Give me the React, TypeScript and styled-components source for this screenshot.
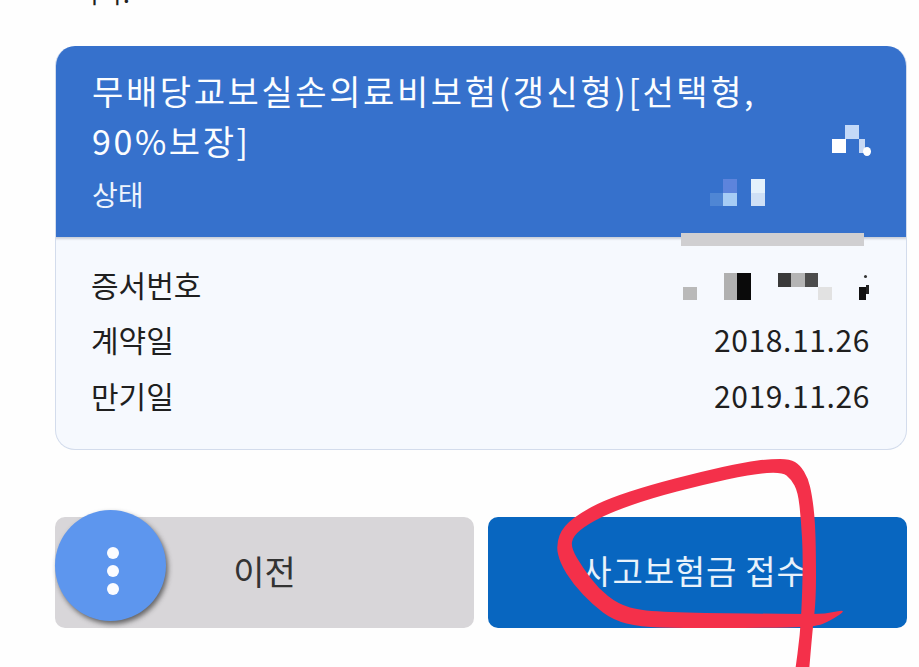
import React from 'react';
import styled, { createGlobalStyle } from 'styled-components';

const GlobalStyle = createGlobalStyle`
  html, body {
    margin: 0;
    padding: 0;
    background: #fefefe;
    overflow: hidden;
  }
  body {
    font-family: "Noto Sans CJK KR", "Noto Sans", sans-serif;
  }
`;

const mosaicCells = [
  { x: 50, y: 69, w: 14, h: 14, c: '#5d84dc' },
  { x: 37, y: 83, w: 13, h: 13, c: '#4f86d4' },
  { x: 50, y: 83, w: 14, h: 13, c: '#a6ccf5' },
  { x: 78, y: 69, w: 14, h: 14, c: '#e4f1fc' },
  { x: 78, y: 83, w: 14, h: 13, c: '#cfe0f6' },
  { x: 172, y: 15, w: 14, h: 14, c: '#c3d9f8' },
  { x: 159, y: 29, w: 14, h: 14, c: '#ffffff' },
  { x: 186, y: 29, w: 6, h: 14, c: '#c8d9f4' },
];

const idCells = [
  { x: 0, y: 14, w: 14, h: 13, c: '#b9b9b9' },
  { x: 41, y: 0, w: 13, h: 27, c: '#b0b0b0' },
  { x: 54, y: 0, w: 14, h: 27, c: '#0a0a0a' },
  { x: 95, y: 0, w: 13, h: 14, c: '#3a3a3a' },
  { x: 108, y: 0, w: 14, h: 14, c: '#b4b4b4' },
  { x: 122, y: 0, w: 13, h: 14, c: '#4c4c4c' },
  { x: 135, y: 14, w: 14, h: 13, c: '#e2e2e2' },
  { x: 176, y: 14, w: 7, h: 13, c: '#111111' },
];

// outline of the red pen stroke, right side first and back along the inside
const scribblePoints: [number, number][] = [
  [809, 672], [812, 635], [816, 600], [816, 555], [815, 520], [812, 495], [808, 478], [800, 465], [790, 459],
  [770, 459], [745, 462], [700, 472], [650, 485], [610, 498], [585, 510], [563, 526], [556, 545],
  [560, 563], [573, 584], [593, 605], [613, 620], [640, 627], [680, 628], [760, 628], [815, 627], [830, 621], [848, 609],
  [825, 614], [800, 614], [700, 613], [642, 611], [618, 604], [598, 588], [583, 568], [571, 548],
  [573, 536], [588, 524], [612, 512], [652, 498], [702, 485], [752, 474], [782, 472], [791, 479], [798, 492],
  [801, 520], [803, 555], [802, 600], [800, 635], [795, 672],
];

function smoothPath(points: [number, number][]) {
  let d = `M${points[0][0]} ${points[0][1]}`;
  for (let i = 1; i < points.length - 1; i++) {
    const [x, y] = points[i];
    const [nx, ny] = points[i + 1];
    d += ` Q${x} ${y} ${(x + nx) / 2} ${(y + ny) / 2}`;
  }
  const last = points[points.length - 1];
  return `${d} L${last[0]} ${last[1]} Z`;
}

function App() {
  return (
    <Page>
      <GlobalStyle />
      <ClippedText>니다.</ClippedText>

      <Card>
        <CardHeader>
          <Title>
            무배당교보실손의료비보험(갱신형)[선택형,
            <br />
            90%보장]
          </Title>
          <Status>상태</Status>
          <HeaderMosaic>
            {mosaicCells.map((cell, i) => (
              <Pixel key={i} $x={cell.x} $y={cell.y} $w={cell.w} $h={cell.h} $c={cell.c} />
            ))}
            <Pixel $x={190} $y={37} $w={8} $h={9} $c="#ffffff" $round />
          </HeaderMosaic>
          <GreyBar />
        </CardHeader>

        <CardBody>
          <InfoRow>
            <InfoLabel>증서번호</InfoLabel>
            <IdMosaic>
              {idCells.map((cell, i) => (
                <Pixel key={i} $x={cell.x} $y={cell.y} $w={cell.w} $h={cell.h} $c={cell.c} />
              ))}
              <Pixel $x={181} $y={2} $w={3} $h={3} $c="#333333" $round />
              <Pixel $x={183} $y={12} $w={3} $h={9} $c="#222222" />
            </IdMosaic>
          </InfoRow>
          <InfoRow>
            <InfoLabel>계약일</InfoLabel>
            <InfoValue>2018.11.26</InfoValue>
          </InfoRow>
          <InfoRow>
            <InfoLabel>만기일</InfoLabel>
            <InfoValue>2019.11.26</InfoValue>
          </InfoRow>
        </CardBody>
      </Card>

      <Buttons>
        <PrevButton>이전</PrevButton>
        <ClaimButton>사고보험금 접수</ClaimButton>
        <Fab aria-label="메뉴">
          <Dot />
          <Dot />
          <Dot />
        </Fab>
      </Buttons>

      <Scribble viewBox="0 0 919 667" aria-hidden="true">
        <path d={smoothPath(scribblePoints)} fill="#f4304a" />
      </Scribble>
    </Page>
  );
}

export default App;

const Page = styled.div`
  position: relative;
  width: 919px;
  height: 667px;
  padding: 0 12px 0 55px;
  box-sizing: border-box;
  overflow: hidden;
  background: #fefefe;
`;

const ClippedText = styled.div`
  height: 46px;
  margin-top: -21px;
  margin-bottom: 21px;
  padding-left: 20px;
  font-size: 26px;
  line-height: 26px;
  color: #222;
`;

const Card = styled.section`
  width: 852px;
  height: 404px;
  border-radius: 20px;
  overflow: hidden;
  box-sizing: border-box;
  background: #f6f9fe;
  border: 1px solid #d3dcec;
  border-top: 0;
  display: flex;
  flex-direction: column;
`;

const CardHeader = styled.header`
  position: relative;
  height: 191px;
  margin: 0 -1px;
  padding: 20px 60px 0 37px;
  box-sizing: border-box;
  background: #3671cc;
  color: #fff;
  flex-shrink: 0;
  box-shadow: 0 2px 2px rgba(120, 130, 150, 0.35);
`;

const Title = styled.h1`
  margin: 0;
  font-size: 34px;
  font-weight: 400;
  line-height: 50px;
  letter-spacing: 2.6px;
  white-space: nowrap;
  color: #fbfdff;
`;

const Status = styled.div`
  margin-top: 5px;
  font-size: 28px;
  line-height: 46px;
  color: #eef4fc;
`;

const HeaderMosaic = styled.div`
  position: absolute;
  left: 618px;
  top: 64px;
  width: 200px;
  height: 100px;
`;

const Pixel = styled.i<{ $x: number; $y: number; $w: number; $h: number; $c: string; $round?: boolean }>`
  position: absolute;
  left: ${({ $x }) => $x}px;
  top: ${({ $y }) => $y}px;
  width: ${({ $w }) => $w}px;
  height: ${({ $h }) => $h}px;
  background: ${({ $c }) => $c};
  border-radius: ${({ $round }) => ($round ? '50%' : '0')};
`;

const GreyBar = styled.div`
  position: absolute;
  left: 626px;
  bottom: -9px;
  width: 183px;
  height: 13px;
  background: #d0cfd1;
  z-index: 1;
`;

const CardBody = styled.div`
  flex: 1;
  padding: 19px 36px 0 35px;
  display: flex;
  flex-direction: column;
`;

const InfoRow = styled.div`
  display: flex;
  justify-content: space-between;
  align-items: center;
  height: 55.5px;
`;

const InfoLabel = styled.span`
  font-size: 30px;
  color: #1f1f1f;
`;

const InfoValue = styled.span`
  font-size: 30px;
  letter-spacing: 0.6px;
  color: #1f1f1f;
`;

const IdMosaic = styled.div`
  position: relative;
  width: 187px;
  height: 27px;
  margin-top: 6px;
`;

const Buttons = styled.div`
  position: relative;
  display: grid;
  grid-template-columns: 419px 419px;
  gap: 14px;
  margin-top: 67px;
`;

const ActionButton = styled.button`
  height: 111px;
  border: 0;
  border-radius: 10px;
  font-family: inherit;
  padding: 0 0 5px;
`;

const PrevButton = styled(ActionButton)`
  background: #d8d6d9;
  color: #333;
  font-size: 34px;
`;

const ClaimButton = styled(ActionButton)`
  background: #0866c0;
  color: #e8f2fb;
  font-size: 33px;
  letter-spacing: 0.8px;
  padding-right: 6px;
`;

const Fab = styled.div`
  position: absolute;
  left: 0;
  top: -7px;
  width: 111px;
  height: 111px;
  border-radius: 50%;
  background: #5d96ee;
  box-shadow: 2px 3px 5px rgba(40, 40, 40, 0.65);
  display: flex;
  flex-direction: column;
  align-items: center;
  justify-content: center;
  gap: 6px;
  padding: 10px 0 0 5px;
  box-sizing: border-box;
`;

const Dot = styled.span`
  width: 12px;
  height: 12px;
  border-radius: 50%;
  background: #fbfcff;
`;

const Scribble = styled.svg`
  position: absolute;
  left: 0;
  top: 0;
  width: 919px;
  height: 667px;
  pointer-events: none;
`;
